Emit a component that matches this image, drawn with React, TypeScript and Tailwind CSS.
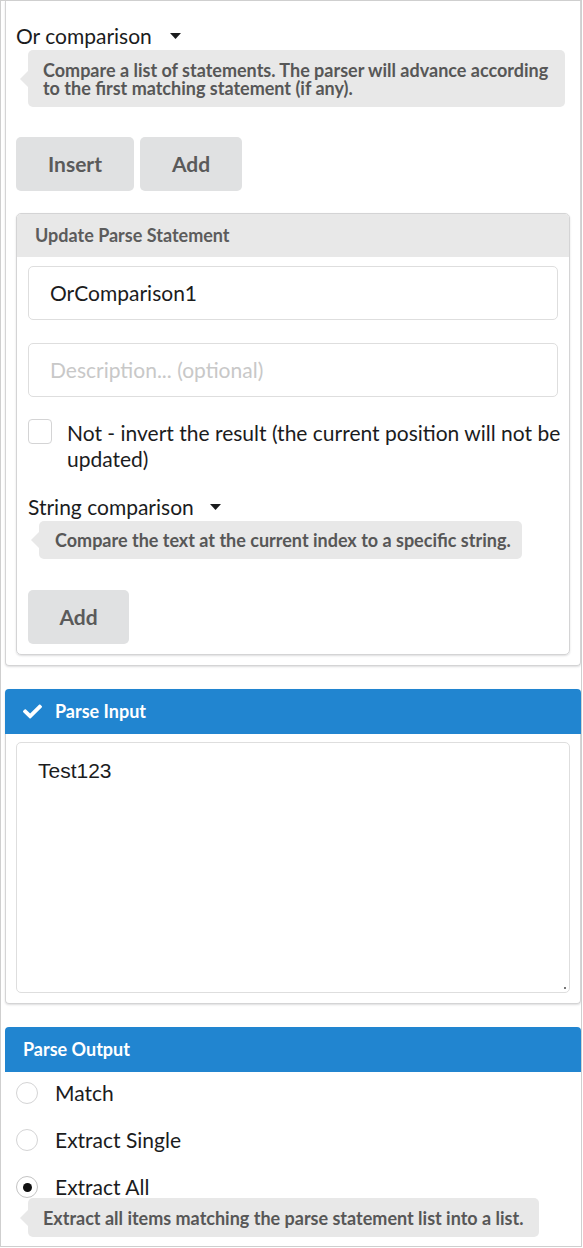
import React from "react";

function Caret() {
  return (
    <svg width="11" height="6" viewBox="0 0 11 6" className="block">
      <polygon points="0,0 11,0 5.5,6" fill="#1b1c1d" />
    </svg>
  );
}

function Bubble({ children, className }: { children: React.ReactNode; className: string }) {
  return (
    <div className={"relative bg-[#e8e8e8] rounded-[5px] text-[18px] leading-[18px] font-bold text-[#575757] " + className}>
      <span className="absolute left-[-8px] top-1/2 -translate-y-1/2 w-0 h-0 border-y-[8px] border-y-transparent border-r-[8px] border-r-[#e8e8e8]" />
      {children}
    </div>
  );
}

function Check() {
  return (
    <svg width="19" height="19" viewBox="0 0 512 512" className="block">
      <path
        fill="#ffffff"
        d="M173.898 439.404l-166.4-166.4c-9.997-9.997-9.997-26.206 0-36.204l36.203-36.204c9.997-9.998 26.207-9.998 36.204 0L192 312.69 432.095 72.596c9.997-9.997 26.207-9.997 36.204 0l36.203 36.204c9.997 9.997 9.997 26.206 0 36.204l-294.4 294.401c-9.998 9.997-26.207 9.997-36.204-.001z"
      />
    </svg>
  );
}

function Radio({ label, checked }: { label: string; checked?: boolean }) {
  return (
    <div className="flex items-center h-[26px]">
      <span
        className={
          "w-[22px] h-[22px] rounded-full border flex items-center justify-center bg-white " +
          (checked ? "border-[#c4c4c4]" : "border-[#d4d4d5]")
        }
      >
        {checked ? <span className="w-[9px] h-[9px] rounded-full bg-[#111]" /> : null}
      </span>
      <span className="ml-[17px] text-[21px] leading-[26px] text-[#1b1c1d]">{label}</span>
    </div>
  );
}

export default function App() {
  return (
    <div className="w-[582px] h-[1247px] border border-[#cfcfcf] overflow-hidden pl-[4px] bg-white font-['Lato','Noto_Sans',sans-serif]">
      {/* Panel 1 */}
      <div className="border border-t-0 border-[#d4d4d5] rounded-b-[4px] shadow-[0_1px_2px_0_rgba(34,36,38,0.15)] px-[10px] pt-[22px] pb-[10px]">
        <div className="flex items-center h-[26px]">
          <span className="text-[21px] leading-[26px] text-[#1b1c1d]">Or comparison</span>
          <span className="ml-[18px]">
            <Caret />
          </span>
        </div>
        <Bubble className="mt-[1px] ml-[12px] w-[537px] pl-[15px] pr-[4px] pt-[11px] pb-[10px]">
          Compare a list of statements. The parser will advance according to the first matching statement (if any).
        </Bubble>
        <div className="mt-[30px] flex gap-[6px]">
          <button className="w-[118px] h-[54px] rounded-[5px] bg-[#e0e1e2] text-[21px] font-bold text-[#5a5a5a]">
            Insert
          </button>
          <button className="w-[102px] h-[54px] rounded-[5px] bg-[#e0e1e2] text-[21px] font-bold text-[#5a5a5a]">
            Add
          </button>
        </div>

        {/* Inner card */}
        <div className="mt-[22px] border border-[#d4d4d5] rounded-[5px] shadow-[0_1px_2px_0_rgba(34,36,38,0.15)] overflow-hidden">
          <div className="h-[43px] bg-[#e8e8e8] pl-[18px] flex items-center text-[18px] font-bold text-[#5c5c5c]">
            Update Parse Statement
          </div>
          <div className="px-[11px] pt-[9px] pb-[10px]">
            <div className="h-[54px] border border-[#dedede] rounded-[5px] pl-[21px] flex items-center text-[21px] text-[#1b1c1d]">
              OrComparison1
            </div>
            <div className="mt-[23px] h-[54px] border border-[#dedede] rounded-[5px] pl-[21px] flex items-center text-[21px] text-[#c8c8c8]">
              Description... (optional)
            </div>
            <div className="mt-[22px] flex items-start">
              <span className="shrink-0 w-[24px] h-[25px] border border-[#d4d4d5] rounded-[4px] bg-white" />
              <span className="ml-[15px] mr-[-8px] mt-[1px] text-[21px] leading-[26px] text-[#1b1c1d]">
                Not - invert the result (the current position will not be updated)
              </span>
            </div>
            <div className="mt-[22px] flex items-center h-[26px]">
              <span className="text-[21px] leading-[26px] text-[#1b1c1d]">String comparison</span>
              <span className="ml-[16px]">
                <Caret />
              </span>
            </div>
            <Bubble className="mt-[1px] ml-[11px] w-[483px] h-[38px] pl-[16px] flex items-center">
              Compare the text at the current index to a specific string.
            </Bubble>
            <button className="mt-[31px] w-[101px] h-[54px] rounded-[5px] bg-[#e0e1e2] text-[21px] font-bold text-[#5a5a5a]">
              Add
            </button>
          </div>
        </div>
      </div>

      {/* Parse Input */}
      <div className="mt-[23px] rounded-[4px] shadow-[0_1px_2px_0_rgba(34,36,38,0.15)]">
        <div className="h-[45px] bg-[#2185d0] rounded-t-[4px] pl-[18px] flex items-center text-white text-[18px] font-bold">
          <Check />
          <span className="ml-[13px]">Parse Input</span>
        </div>
        <div className="border border-t-0 border-[#d4d4d5] rounded-b-[4px] px-[10px] pt-[8px] pb-[10px]">
          <div className="relative">
            <textarea
              readOnly
              defaultValue="Test123"
              className="block w-full h-[251px] resize-none border border-[#dedede] rounded-[5px] pl-[21px] pt-[16px] text-[21px] leading-[24px] text-[#1b1c1d] font-['Liberation_Sans',Arial,sans-serif] outline-none"
            />
            <span className="absolute right-[4px] bottom-[4px] w-[2px] h-[2px] bg-[#777]" />
          </div>
        </div>
      </div>

      {/* Parse Output */}
      <div className="mt-[23px]">
        <div className="h-[45px] bg-[#2185d0] rounded-t-[4px] pl-[18px] flex items-center text-white text-[18px] font-bold">
          Parse Output
        </div>
        <div className="pl-[11px] pt-[8px] pb-[20px] flex flex-col gap-[21px]">
          <Radio label="Match" />
          <Radio label="Extract Single" />
          <div>
            <Radio label="Extract All" checked />
            <Bubble className="-mt-[2px] ml-[12px] w-[511px] h-[39px] pl-[15px] flex items-center">
              Extract all items matching the parse statement list into a list.
            </Bubble>
          </div>
        </div>
      </div>
    </div>
  );
}
